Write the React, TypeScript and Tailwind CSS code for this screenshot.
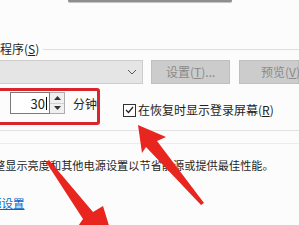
export default function App() {
  const font = { fontFamily: '"Noto Sans CJK SC", "Noto Sans", sans-serif' };
  return (
    <div
      className="relative w-[299px] h-[225px] overflow-hidden bg-[#fcfcfc] text-[#1e1e1e]"
      style={font}
    >
      {/* bottom edge of the preview monitor */}
      <div className="ml-[68px] w-[164px] h-[3px] rounded-b-[2px] bg-[#8e8e8e] border-b border-[#c4c4c4]" />

      {/* group header */}
      <div className="mt-[39px] flex h-[14px] items-center">
        <span className="text-[12px] leading-[14px] whitespace-nowrap">
          程序(<span className="underline">S</span>)
        </span>
        <div className="ml-[4px] h-px flex-1 bg-[#dedede]" />
      </div>

      {/* screensaver select + buttons */}
      <div className="mt-[4px] flex h-[24px]">
        <div className="-ml-[4px] flex w-[157px] items-center justify-end border border-[#cdcdcd] bg-[#e5e5e5] pr-[4px]">
          <svg width="10" height="6" viewBox="0 0 10 6" className="mr-[1px]">
            <path d="M1 1 L5 5 L9 1" fill="none" stroke="#5a5a5a" strokeWidth="1" />
          </svg>
        </div>
        <div className="ml-[8px] flex w-[84px] items-center justify-center border border-[#bfbfbf] bg-[#cccccc] text-[12px] text-[#8a8a8a] whitespace-nowrap">
          设置(<span className="underline">T</span>)...
        </div>
        <div className="ml-[9px] flex w-[60px] items-center border border-[#bfbfbf] bg-[#cccccc] pl-[21px] text-[12px] text-[#8a8a8a] whitespace-nowrap">
          预览(<span className="underline">V</span>)
        </div>
      </div>

      {/* wait time + checkbox */}
      <div className="mt-[4px] flex h-[37px] items-start">
        <div className="-ml-[6px] flex h-[37px] w-[106px] items-start rounded-[3px] border-[3px] border-[#d8262c] pt-[1px]">
          <div className="ml-[13px] flex h-[22px] w-[40px] items-center justify-end border border-[#7a7a7a] bg-white pr-[2px] text-[13px] leading-none">
            30
            <span className="ml-[1px] h-[13px] w-px bg-black" />
          </div>
          <div className="flex h-[22px] w-[15px] flex-col border border-l-0 border-[#adadad] bg-[#f0f0f0]">
            <div className="flex flex-1 items-center justify-center border-b border-[#cfcfcf]">
              <svg width="7" height="4" viewBox="0 0 7 4">
                <path d="M0 4 L3.5 0 L7 4 Z" fill="#333" />
              </svg>
            </div>
            <div className="flex flex-1 items-center justify-center">
              <svg width="7" height="4" viewBox="0 0 7 4">
                <path d="M0 0 L3.5 4 L7 0 Z" fill="#333" />
              </svg>
            </div>
          </div>
          <span className="ml-[8px] mt-[5px] text-[12px] leading-[14px] whitespace-nowrap">分钟</span>
        </div>
        <div className="ml-[23px] mt-[15px] flex items-center">
          <div className="flex h-[13px] w-[13px] items-center justify-center border border-[#333] bg-white">
            <svg width="9" height="8" viewBox="0 0 9 8">
              <path d="M1 4 L3.5 6.5 L8 1" fill="none" stroke="#222" strokeWidth="1.2" />
            </svg>
          </div>
          <span className="ml-[2px] text-[12px] leading-[14px] whitespace-nowrap">
            在恢复时显示登录屏幕(<span className="underline">R</span>)
          </span>
        </div>
      </div>

      <div className="mt-[5px] h-px bg-[#e2e2e2]" />
      <div className="mt-[12px] h-px bg-[#ececec]" />

      <div className="mt-[14px] -ml-[6px] text-[11.2px] leading-[14px] whitespace-nowrap">
        整显示亮度和其他电源设置以节省能源或提供最佳性能。
      </div>

      <div className="mt-[24px] -ml-[10px] text-[11.5px] leading-[14px] whitespace-nowrap text-[#0a64c8] underline">
        源设置
      </div>

      {/* red annotation arrows */}
      <svg
        className="pointer-events-none absolute inset-0"
        width="299"
        height="225"
        viewBox="0 0 299 225"
      >
        <polygon
          points="138,125 166,137 157,141 204,203 201,205 146,147 142,153"
          fill="#e8261f"
        />
        <polygon
          points="46,162 49,160 93,212 103,206 114,242 74,232 83,219"
          fill="#e8261f"
        />
      </svg>
    </div>
  );
}
